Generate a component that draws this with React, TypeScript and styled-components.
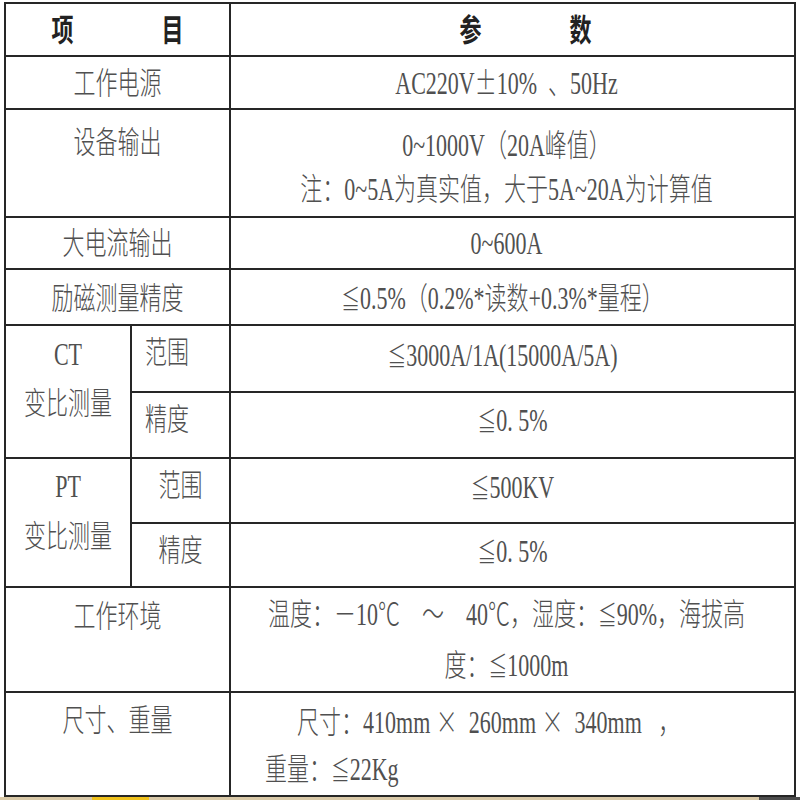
import React from 'react';
import styled, { createGlobalStyle } from 'styled-components';

const GlobalStyle = createGlobalStyle`
  html, body {
    margin: 0;
    padding: 0;
    background: #fff;
  }
  body {
    font-family: 'Liberation Serif', 'Noto Sans CJK SC', serif;
  }
`;

const Page = styled.div`
  width: 800px;
  height: 800px;
  display: flex;
  flex-direction: column;
  overflow: hidden;
  background: #fff;
`;

const SpecTable = styled.table`
  margin: 2px 0 0 4px;
  width: 790px;
  border-collapse: collapse;
  table-layout: fixed;
  color: #505050;
  font-size: 22px;
  font-weight: 300;
`;

const Row = styled.tr<{ $h: number }>`
  height: ${(p) => p.$h}px;
`;

const Cell = styled.td<{
  $align?: 'center' | 'left';
  $pt?: number;
  $pl?: number;
  $pr?: number;
  $lh?: number;
  $strong?: boolean;
}>`
  border: 2px solid #262626;
  padding: ${(p) => p.$pt ?? 0}px ${(p) => p.$pr ?? 0}px 0 ${(p) => p.$pl ?? 0}px;
  text-align: ${(p) => p.$align ?? 'center'};
  vertical-align: top;
  line-height: ${(p) => p.$lh ?? 49}px;
  white-space: pre;
  font-weight: ${(p) => (p.$strong ? 700 : 300)};
  color: ${(p) => (p.$strong ? '#222' : 'inherit')};
`;

const Line = styled.div<{ $indent?: number }>`
  padding-left: ${(p) => p.$indent ?? 0}px;
`;

const Glyphs = styled.span`
  display: inline-block;
  transform: scaleY(1.42);
`;

/* symbols drawn from the CJK face so they come out wide, as in the scan */
const Sym = styled.span<{ $size?: number }>`
  font-family: 'Noto Sans CJK SC', sans-serif;
  font-size: ${(p) => p.$size ?? 1}em;
  line-height: 1;
`;

const GroundStrip = styled.div`
  flex: 1;
  background: linear-gradient(
    90deg,
    #d9c9a8 0 92px,
    #f0c21c 92px 149px,
    #d9c9a8 149px 759px,
    #4d4d4d 759px
  );
`;

const T = ({ children, indent }: { children: React.ReactNode; indent?: number }) => (
  <Line $indent={indent}>
    <Glyphs>{children}</Glyphs>
  </Line>
);

const Le = () => <Sym $size={0.85}>≦</Sym>;

export default function App() {
  return (
    <Page>
      <GlobalStyle />
      <SpecTable>
        <colgroup>
          <col style={{ width: 126 }} />
          <col style={{ width: 99 }} />
          <col style={{ width: 565 }} />
        </colgroup>
        <tbody>
          <Row $h={52}>
            <Cell colSpan={2} $strong $pt={2}>
              <T>项　　　　目</T>
            </Cell>
            <Cell $strong $pt={2} $pl={26}>
              <T>参　　　　数</T>
            </Cell>
          </Row>
          <Row $h={53}>
            <Cell colSpan={2} $pt={2}>
              <T>工作电源</T>
            </Cell>
            <Cell $pt={2} $pr={12}>
              <T>
                AC220V<Sym>±</Sym>10%  、50Hz
              </T>
            </Cell>
          </Row>
          <Row $h={108}>
            <Cell colSpan={2} $pt={8}>
              <T>设备输出</T>
            </Cell>
            <Cell $pt={14} $lh={44} $pr={12}>
              <T>0~1000V（20A峰值）</T>
              <T>注：0~5A为真实值，大于5A~20A为计算值</T>
            </Cell>
          </Row>
          <Row $h={52}>
            <Cell colSpan={2} $pt={1}>
              <T>大电流输出</T>
            </Cell>
            <Cell $pt={1} $pr={12}>
              <T>0~600A</T>
            </Cell>
          </Row>
          <Row $h={56}>
            <Cell colSpan={2} $pt={4}>
              <T>励磁测量精度</T>
            </Cell>
            <Cell $pt={4} $pr={20}>
              <T>
                <Le />
                0.5%（0.2%*读数+0.3%*量程）
              </T>
            </Cell>
          </Row>
          <Row $h={67}>
            <Cell rowSpan={2} $pt={4}>
              <T>CT</T>
              <T>变比测量</T>
            </Cell>
            <Cell $align="left" $pl={13} $pt={2}>
              <T>范围</T>
            </Cell>
            <Cell $pt={5} $pr={20}>
              <T>
                <Le />
                3000A/1A(15000A/5A)
              </T>
            </Cell>
          </Row>
          <Row $h={66}>
            <Cell $align="left" $pl={13} $pt={2}>
              <T>精度</T>
            </Cell>
            <Cell $pt={3}>
              <T>
                <Le />
                0. 5%
              </T>
            </Cell>
          </Row>
          <Row $h={65}>
            <Cell rowSpan={2} $pt={3} $lh={50}>
              <T>PT</T>
              <T>变比测量</T>
            </Cell>
            <Cell $pt={2}>
              <T>范围</T>
            </Cell>
            <Cell $pt={4}>
              <T>
                <Le />
                500KV
              </T>
            </Cell>
          </Row>
          <Row $h={64}>
            <Cell $pt={2}>
              <T>精度</T>
            </Cell>
            <Cell $pt={3}>
              <T>
                <Le />
                0. 5%
              </T>
            </Cell>
          </Row>
          <Row $h={103}>
            <Cell colSpan={2} $pt={4}>
              <T>工作环境</T>
            </Cell>
            <Cell $pt={1} $lh={51} $pr={12}>
              <T>
                温度：－10℃    ～    40℃，湿度：<Le />
                90%，海拔高
              </T>
              <T>
                度：<Le />
                1000m
              </T>
            </Cell>
          </Row>
          <Row $h={104}>
            <Cell colSpan={2} $pt={3}>
              <T>尺寸、重量</T>
            </Cell>
            <Cell $align="left" $pl={34} $pt={6} $lh={47}>
              <T indent={32}>
                尺寸：410mm <Sym>×</Sym>  260mm <Sym>×</Sym>  340mm   ，
              </T>
              <T>
                重量：<Le />
                22Kg
              </T>
            </Cell>
          </Row>
        </tbody>
      </SpecTable>
      <GroundStrip />
    </Page>
  );
}
